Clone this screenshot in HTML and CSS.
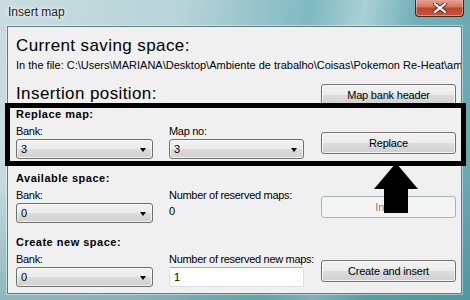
FILE: index.html
```html
<!DOCTYPE html>
<html lang="en">
<head>
    <meta charset="UTF-8">
    <title>Insert map</title>
    <link rel="stylesheet" href="styles.css">
</head>
<body>
    <div class="window">
        <!-- Title bar -->
        <div class="titlebar">
            <span class="title">Insert map</span>
            <div class="close">
                <svg width="14" height="10" viewBox="0 0 14 10">
                    <path d="M2 1 L12 9 M12 1 L2 9" stroke="#5a2a22" stroke-width="4" stroke-linecap="square"/>
                    <path d="M2 1 L12 9 M12 1 L2 9" stroke="#fff" stroke-width="2.2" stroke-linecap="square"/>
                </svg>
            </div>
        </div>

        <!-- Client area -->
        <div class="client">
            <h1 class="heading">Current saving space:</h1>
            <p class="path">In the file: C:\Users\MARIANA\Desktop\Ambiente de trabalho\Coisas\Pokemon Re-Heat\am</p>

            <div class="heading-row">
                <h1 class="heading">Insertion position:</h1>
                <button class="btn">Map bank header</button>
            </div>

            <section class="group">
                <h2>Replace map:</h2>
                <div class="fields">
                    <span class="lbl">Bank:</span>
                    <span class="lbl">Map no:</span>
                    <div class="combo">3</div>
                    <div class="combo">3</div>
                    <button class="btn action">Replace</button>
                </div>
            </section>

            <section class="group">
                <h2>Available space:</h2>
                <div class="fields">
                    <span class="lbl">Bank:</span>
                    <span class="lbl">Number of reserved maps:</span>
                    <div class="combo">0</div>
                    <div class="value">0</div>
                    <button class="btn action" disabled>Insert</button>
                </div>
            </section>

            <section class="group">
                <h2>Create new space:</h2>
                <div class="fields">
                    <span class="lbl">Bank:</span>
                    <span class="lbl">Number of reserved new maps:</span>
                    <div class="combo">0</div>
                    <div class="textbox">1</div>
                    <button class="btn action">Create and insert</button>
                </div>
            </section>
        </div>

        <!-- Annotation overlay -->
        <div class="highlight"></div>
        <svg class="arrow" width="44" height="50" viewBox="0 0 44 50">
            <polygon points="22,0 0,26 10,26 10,50 34,50 34,26 44,26" fill="#000"/>
        </svg>
    </div>
</body>
</html>
```

FILE: styles.css
```css
/* Basic Styling */
body {
    margin: 0;
    font-family: "Liberation Sans", Arial, sans-serif;
    font-size: 11px;
    color: #000;
}

.window {
    position: relative;
    width: 470px;
    height: 300px;
    box-sizing: border-box;
    padding: 0 8px 6px 7px;
    display: flex;
    flex-direction: column;
    overflow: hidden;
    background:
        linear-gradient(to bottom, rgba(255,255,255,0) 60%, rgba(40,120,128,0.35) 100%),
        linear-gradient(100deg, #c9dce0 0%, #b6d3d8 35%, #80b9c0 60%, #a9d0d5 70%, #72b0b8 80%, #62a7b0 100%);
}

/* Title bar */
.titlebar {
    height: 26px;
    position: relative;
    flex-shrink: 0;
}

.title {
    position: absolute;
    left: 1px;
    top: 5px;
    font-size: 12px;
    color: #1a1a1a;
    text-shadow: 0 0 6px #fff, 0 0 3px #fff;
}

.close {
    position: absolute;
    right: -2px;
    top: -1px;
    width: 47px;
    height: 17px;
    border: 1px solid #4b2118;
    border-top: none;
    border-radius: 0 0 4px 4px;
    background: linear-gradient(to bottom, #e9a899 0%, #d7735e 45%, #c0432b 55%, #c9573d 100%);
    box-shadow: inset 0 0 0 1px rgba(255,255,255,0.35);
    display: flex;
    align-items: center;
    justify-content: center;
}

/* Client area */
.client {
    flex: 1;
    background: #f0f0f0;
    border: 1px solid #5f7c82;
    box-shadow: 0 0 0 1px rgba(255,255,255,0.45);
    padding: 9px 0 0 8px;
    overflow: hidden;
}

.heading {
    margin: 0;
    font-size: 17px;
    font-weight: normal;
    line-height: 20px;
    letter-spacing: 0.4px;
}

.path {
    margin: 3px 0 0;
    line-height: 13px;
    white-space: nowrap;
    letter-spacing: 0;
}

.heading-row {
    margin-top: 12px;
    display: flex;
    justify-content: space-between;
    align-items: flex-start;
    padding-right: 5px;
}

/* Buttons */
.btn {
    width: 135px;
    height: 22px;
    padding: 0;
    font-family: inherit;
    font-size: 11px;
    letter-spacing: -0.2px;
    color: #000;
    border: 1px solid #707070;
    border-radius: 3px;
    background: linear-gradient(to bottom, #f2f2f2 0%, #ebebeb 50%, #dddddd 50%, #cfcfcf 100%);
    box-shadow: inset 0 0 0 1px rgba(255,255,255,0.7);
}

.btn:disabled {
    color: #838383;
    border-color: #adb2b5;
    background: #f4f4f4;
    box-shadow: none;
}

/* Groups */
.group {
    margin-top: 2px;
}

.group + .group {
    margin-top: 13px;
}

.group h2 {
    margin: 0 0 4px;
    font-size: 11px;
    line-height: 13px;
    letter-spacing: 0.5px;
}

.fields {
    display: grid;
    grid-template-columns: 137px 135px 135px;
    grid-template-rows: 13px 20px;
    column-gap: 16px;
    row-gap: 1px;
}

.lbl {
    line-height: 13px;
    letter-spacing: -0.3px;
    white-space: nowrap;
}

.action {
    grid-column: 3;
    grid-row: 1 / 3;
    align-self: end;
    margin-bottom: 5px;
    margin-left: 1px;
}

.combo {
    position: relative;
    box-sizing: border-box;
    height: 20px;
    line-height: 18px;
    padding-left: 4px;
    border: 1px solid #707070;
    border-radius: 3px;
    background: linear-gradient(to bottom, #f2f2f2 0%, #ebebeb 50%, #dddddd 50%, #cfcfcf 100%);
    box-shadow: inset 0 0 0 1px rgba(255,255,255,0.7);
}

.combo::after {
    content: "";
    position: absolute;
    right: 6px;
    top: 8px;
    border-left: 3.5px solid transparent;
    border-right: 3.5px solid transparent;
    border-top: 4px solid #000;
}

.value {
    padding-top: 2px;
    line-height: 13px;
}

.textbox {
    box-sizing: border-box;
    height: 20px;
    line-height: 18px;
    padding-left: 4px;
    background: #fff;
    border: 1px solid #dbdfe6;
    border-top-color: #abadb3;
    border-radius: 2px;
}

/* Annotation overlay */
.highlight {
    position: absolute;
    left: 5px;
    top: 103px;
    width: 461px;
    height: 63px;
    box-sizing: border-box;
    border: 5px solid #000;
}

.arrow {
    position: absolute;
    left: 374px;
    top: 163px;
}
```
